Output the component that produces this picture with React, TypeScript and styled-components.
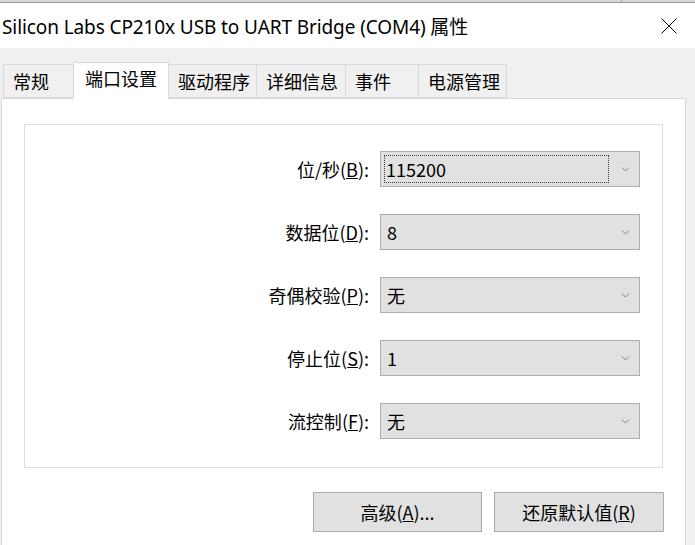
import React from "react";
import styled, { createGlobalStyle } from "styled-components";

const GlobalStyle = createGlobalStyle`
  html, body { margin: 0; padding: 0; background: #f0f0f0; }
  body {
    font-family: "Noto Sans CJK SC", "Noto Sans", sans-serif;
    color: #000;
  }
  * { box-sizing: border-box; }
`;

const Window = styled.div`
  width: 695px;
  height: 545px;
  overflow: hidden;
  display: flex;
  flex-direction: column;
  background: #f0f0f0;
`;

const TopStrip = styled.div`
  height: 3px;
  display: flex;
  background: #d6d6d6;
  border-bottom: 1px solid #9c9c9c;
`;

const StripSegment = styled.div<{ $w: number }>`
  width: ${(p) => p.$w}px;
  border-right: 1px solid #b0b0b0;
`;

const TitleBar = styled.div`
  height: 45px;
  background: #fff;
  display: flex;
  align-items: center;
  padding-left: 2px;
`;

const Title = styled.div`
  flex: 1;
  font-family: "Noto Sans", "Noto Sans CJK SC", sans-serif;
  font-size: 19px;
  white-space: nowrap;
  letter-spacing: -0.1px;
`;

const CloseButton = styled.div`
  width: 46px;
  height: 45px;
  display: flex;
  align-items: center;
  justify-content: center;
  margin-right: 3px;
`;

const Body = styled.div`
  flex: 1;
  display: flex;
  flex-direction: column;
  padding: 14px 9px 0 1px;
`;

const TabStrip = styled.div`
  height: 36px;
  display: flex;
  align-items: flex-end;
  padding-left: 2px;
  position: relative;
  z-index: 1;
`;

const Tab = styled.div<{ $w: number; $active?: boolean }>`
  width: ${(p) => p.$w}px;
  height: ${(p) => (p.$active ? 37 : 34)}px;
  margin-bottom: ${(p) => (p.$active ? -1 : 0)}px;
  margin-right: -1px;
  background: ${(p) => (p.$active ? "#fff" : "#f0f0f0")};
  border: 1px solid #d9d9d9;
  border-bottom: ${(p) => (p.$active ? "none" : "1px solid #d9d9d9")};
  font-size: 18px;
  line-height: 1;
  display: flex;
  align-items: ${(p) => (p.$active ? "flex-start" : "center")};
  padding-top: ${(p) => (p.$active ? 6 : 0)}px;
  padding-left: ${(p) => (p.$active ? 11 : 9)}px;
  white-space: nowrap;
  position: relative;
  z-index: ${(p) => (p.$active ? 2 : 1)};
`;

const Panel = styled.div`
  flex: 1;
  background: #fff;
  border: 1px solid #d9d9d9;
  border-bottom: none;
  padding: 25px 22px 0 22px;
  display: flex;
  flex-direction: column;
`;

const GroupBox = styled.div`
  height: 344px;
  border: 1px solid #dcdcdc;
  padding-top: 26px;
  display: grid;
  grid-template-columns: 344px 260px;
  column-gap: 11px;
  row-gap: 27px;
  align-content: start;
`;

const Label = styled.div`
  font-size: 18px;
  text-align: right;
  align-self: center;
  white-space: nowrap;
`;

const Combo = styled.div`
  height: 36px;
  background: #e1e1e1;
  border: 1px solid #adadad;
  display: flex;
  align-items: center;
`;

const ComboValue = styled.div<{ $focused?: boolean }>`
  flex: 1;
  height: 28px;
  margin-left: 3px;
  padding-left: ${(p) => (p.$focused ? 1 : 2)}px;
  border: 1px ${(p) => (p.$focused ? "dotted #3a3a3a" : "solid transparent")};
  font-size: 18px;
  display: flex;
  align-items: center;
  line-height: 1;
`;

const ChevronBox = styled.div`
  width: 30px;
  display: flex;
  justify-content: center;
  align-items: center;
  padding-left: 2px;
`;

const ButtonRow = styled.div`
  margin-top: 24px;
  margin-right: -1px;
  display: flex;
  justify-content: flex-end;
  gap: 12px;
`;

const Button = styled.div<{ $w: number }>`
  width: ${(p) => p.$w}px;
  height: 40px;
  background: #e1e1e1;
  border: 1px solid #adadad;
  font-size: 18px;
  display: flex;
  align-items: center;
  justify-content: center;
  white-space: nowrap;
`;

const Chevron = () => (
  <svg width="9" height="5" viewBox="0 0 9 5">
    <polyline points="1,0.5 4.5,4 8,0.5" fill="none" stroke="#808080" strokeWidth="1" />
  </svg>
);

const CloseIcon = () => (
  <svg width="16" height="16" viewBox="0 0 16 16">
    <line x1="0.5" y1="0.5" x2="15.5" y2="15.5" stroke="#000" strokeWidth="1" />
    <line x1="15.5" y1="0.5" x2="0.5" y2="15.5" stroke="#000" strokeWidth="1" />
  </svg>
);

const tabs = [
  { label: "常规", w: 71 },
  { label: "端口设置", w: 96, active: true },
  { label: "驱动程序", w: 89 },
  { label: "详细信息", w: 90 },
  { label: "事件", w: 74 },
  { label: "电源管理", w: 89 },
];

const rows: { pre: string; key: string; value: string; focused?: boolean }[] = [
  { pre: "位/秒", key: "B", value: "115200", focused: true },
  { pre: "数据位", key: "D", value: "8" },
  { pre: "奇偶校验", key: "P", value: "无" },
  { pre: "停止位", key: "S", value: "1" },
  { pre: "流控制", key: "F", value: "无" },
];

export default function App() {
  return (
    <>
      <GlobalStyle />
      <Window>
        <TopStrip>
          <StripSegment $w={622} />
        </TopStrip>
        <TitleBar>
          <Title>Silicon Labs CP210x USB to UART Bridge (COM4) 属性</Title>
          <CloseButton>
            <CloseIcon />
          </CloseButton>
        </TitleBar>
        <Body>
          <TabStrip>
            {tabs.map((t) => (
              <Tab key={t.label} $w={t.w} $active={t.active}>
                {t.label}
              </Tab>
            ))}
          </TabStrip>
          <Panel>
            <GroupBox>
              {rows.map((r) => (
                <React.Fragment key={r.key}>
                  <Label>
                    {r.pre}(<u>{r.key}</u>):
                  </Label>
                  <Combo>
                    <ComboValue $focused={r.focused}>{r.value}</ComboValue>
                    <ChevronBox>
                      <Chevron />
                    </ChevronBox>
                  </Combo>
                </React.Fragment>
              ))}
            </GroupBox>
            <ButtonRow>
              <Button $w={169}>
                高级(<u>A</u>)...
              </Button>
              <Button $w={170}>
                还原默认值(<u>R</u>)
              </Button>
            </ButtonRow>
          </Panel>
        </Body>
      </Window>
    </>
  );
}
